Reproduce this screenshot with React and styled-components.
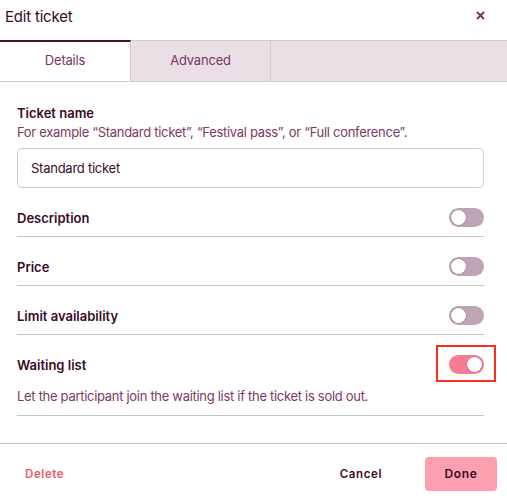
import React from "react";
import styled, { createGlobalStyle } from "styled-components";

const Global = createGlobalStyle`
  html, body { margin: 0; padding: 0; background: #fff; }
  body { font-family: Inter, "Noto Sans", sans-serif; color: #3a0b27; }
  * { box-sizing: border-box; }
`;

const Modal = styled.div`
  width: 507px;
  height: 503px;
  display: flex;
  flex-direction: column;
  background: #fff;
`;

const Header = styled.div`
  height: 40px;
  display: flex;
  align-items: flex-start;
  justify-content: space-between;
  padding: 7px 22px 0 5px;
`;

const Title = styled.h1`
  margin: 0;
  font-size: 15px;
  line-height: 20px;
  font-weight: 400;
  letter-spacing: -0.2px;
  color: #3a0b27;
`;

const Close = styled.button`
  border: 0;
  background: none;
  padding: 0;
  margin-top: 4px;
  width: 9px;
  height: 9px;
  display: flex;
  color: #7b2e5e;
`;

const Tabs = styled.div`
  display: flex;
  height: 42px;
  background: #e9dfe5;
  border-top: 1px solid #d8c9d1;
  border-bottom: 1px solid #d8c9d1;
`;

const Tab = styled.div`
  width: ${(p) => p.$w}px;
  display: flex;
  align-items: center;
  justify-content: center;
  font-size: 13px;
  letter-spacing: -0.2px;
  color: #7a3563;
  margin-top: -1px;
  background: ${(p) => (p.$active ? "#fff" : "transparent")};
  border-top: 2px solid ${(p) => (p.$active ? "#4a0d31" : "transparent")};
  border-right: 1px solid #d8c9d1;
  padding-bottom: 4px;
`;

const Body = styled.div`
  flex: 1;
  padding: 22px 23px 0 17px;
  display: flex;
  flex-direction: column;
`;

const Label = styled.div`
  font-size: 13px;
  line-height: 18px;
  font-weight: 600;
  color: #3a0b27;
`;

const Help = styled.div`
  font-size: 13px;
  line-height: 19px;
  letter-spacing: -0.3px;
  color: #7c3a62;
  margin-top: ${(p) => p.$mt || 0}px;
`;

const Input = styled.div`
  margin-top: 6px;
  height: 40px;
  border: 1px solid #dbc4d0;
  border-radius: 5px;
  display: flex;
  align-items: center;
  padding-left: 13px;
  font-size: 13px;
  letter-spacing: -0.25px;
  color: #3a0b27;
`;

const Section = styled.div`
  border-bottom: 1px solid #c6c6c6;
  padding: 20px 0 9px;
`;

const Row = styled.div`
  display: flex;
  align-items: center;
  justify-content: space-between;
  height: 19px;
`;

const Toggle = styled.div`
  width: 35px;
  height: 19px;
  border-radius: 10px;
  background: ${(p) => (p.$on ? "#f77c91" : "#bfa4b6")};
  display: flex;
  align-items: center;
  justify-content: ${(p) => (p.$on ? "flex-end" : "flex-start")};
  padding: 0 2px;
`;

const Knob = styled.div`
  width: 15px;
  height: 15px;
  border-radius: 50%;
  background: #fff;
  box-shadow: 0 0 0 0.5px rgba(90, 40, 70, 0.35);
`;

const Highlight = styled.div`
  position: relative;
  &::after {
    content: "";
    position: absolute;
    left: -13px;
    right: -12px;
    top: -10px;
    bottom: -8px;
    border: 2px solid #ff2b1c;
  }
`;

const Footer = styled.div`
  height: 60px;
  border-top: 1px solid #c6c6c6;
  display: flex;
  align-items: center;
  padding: 0 10px 0 0;
`;

const TextButton = styled.button`
  border: 0;
  background: none;
  font-family: inherit;
  font-size: 11.5px;
  font-weight: 600;
  letter-spacing: 0.6px;
  color: ${(p) => p.$color};
  padding: 0;
  margin-left: ${(p) => p.$ml || 0}px;
`;

const Spacer = styled.div`
  flex: 1;
`;

const Primary = styled.button`
  border: 0;
  margin-left: 43px;
  width: 72px;
  height: 34px;
  border-radius: 4px;
  background: #fc9fae;
  font-family: inherit;
  font-size: 12px;
  font-weight: 600;
  letter-spacing: 0.6px;
  color: #3a0b27;
`;

function Switch({ on }) {
  return (
    <Toggle $on={on}>
      <Knob />
    </Toggle>
  );
}

export default function App() {
  return (
    <>
      <Global />
      <Modal>
        <Header>
          <Title>Edit ticket</Title>
          <Close aria-label="Close">
            <svg width="9" height="9" viewBox="0 0 9 9">
              <path d="M1 1L8 8M8 1L1 8" stroke="currentColor" strokeWidth="1.8" />
            </svg>
          </Close>
        </Header>
        <Tabs>
          <Tab $w={131} $active>Details</Tab>
          <Tab $w={140}>Advanced</Tab>
        </Tabs>
        <Body>
          <Label>Ticket name</Label>
          <Help $mt={1}>For example “Standard ticket”, “Festival pass”, or “Full conference”.</Help>
          <Input>Standard ticket</Input>
          <Section>
            <Row>
              <Label>Description</Label>
              <Switch />
            </Row>
          </Section>
          <Section>
            <Row>
              <Label>Price</Label>
              <Switch />
            </Row>
          </Section>
          <Section>
            <Row>
              <Label>Limit availability</Label>
              <Switch />
            </Row>
          </Section>
          <Section>
            <Row>
              <Label>Waiting list</Label>
              <Highlight>
                <Switch on />
              </Highlight>
            </Row>
            <Help $mt={13}>Let the participant join the waiting list if the ticket is sold out.</Help>
          </Section>
        </Body>
        <Footer>
          <TextButton $color="#ee5a6c" $ml={25}>Delete</TextButton>
          <Spacer />
          <TextButton $color="#3a0b27">Cancel</TextButton>
          <Primary>Done</Primary>
        </Footer>
      </Modal>
    </>
  );
}
